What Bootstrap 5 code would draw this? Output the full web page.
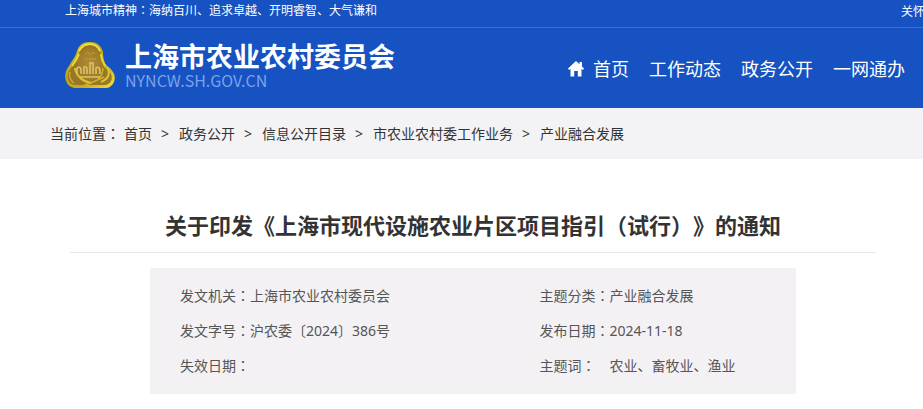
<!DOCTYPE html>
<html lang="zh-CN">
<head>
<meta charset="utf-8">
<meta name="viewport" content="width=device-width, initial-scale=1">
<title>上海市农业农村委员会</title>
<link rel="stylesheet" href="https://cdn.jsdelivr.net/npm/bootstrap@5.3.0/dist/css/bootstrap.min.css">
<style>
  body { font-family: "Noto Sans", "Noto Sans CJK SC", sans-serif; font-size: 14px; line-height: 20px; color: #333; overflow-x: hidden; text-spacing-trim: space-all; }
  .mid { font-family: "Noto Sans CJK TC", sans-serif; }
  .site-head { background: #1652c1; }
  .top-strip { height: 28px; padding-left: 65px; font-size: 12px; border-bottom: 1px solid #3a70d0; overflow: hidden; }
  .top-strip a { width: 22px; overflow: hidden; margin-top: 2px; }
  .main-bar { height: 80px; padding: 0 18px 6px 65px; }
  .brand-text { margin-left: 10px; }
  .brand-name { font-family: "Noto Sans CJK SC", sans-serif; font-size: 27px; line-height: 30px; font-weight: 700; }
  .brand-url { font-family: "Noto Sans CJK SC", sans-serif; font-size: 16px; line-height: 18px; color: #7ba2ec; }
  .main-nav { gap: 20px; font-size: 18px; line-height: 24px; padding-top: 8px; }
  .crumbs { background: #f3f3f5; height: 51px; padding: 0 50px; --bs-breadcrumb-divider: ">"; }
  .crumbs .breadcrumb-item + .breadcrumb-item { padding-left: 9px; }
  .crumbs .breadcrumb-item + .breadcrumb-item::before { padding-right: 10px; color: #333; }
  .crumbs a { color: #333; }
  .notice { padding: 51px 47px 15px 70px; }
  .notice h1 { font-size: 22px; line-height: 28px; padding-bottom: 13px; border-bottom: 1px solid #e8e8e8; }
  .facts { background: #f3f1f4; margin: 15px 80px 0; padding: 10px 0 11px 30px; color: #555; line-height: 35px; }
  .facts th { width: 70px; font-weight: 400; padding: 0; }
  .facts td { padding: 0; }
  .facts table { table-layout: fixed; }
  .facts .wide { width: 47%; }
</style>
<script src="https://cdn.jsdelivr.net/npm/bootstrap@5.3.0/dist/js/bootstrap.bundle.min.js" defer></script>
</head>
<body>
<header class="site-head text-white">
  <div class="top-strip d-flex justify-content-between text-nowrap">
    <span>上海城市精神<span class="mid" lang="zh-TW">：</span>海纳百川、追求卓越、开明睿智、大气谦和</span>
    <a href="#" class="text-white text-decoration-none">关怀版</a>
  </div>
  <div class="main-bar d-flex align-items-center justify-content-between text-nowrap">
    <a href="#" class="d-flex align-items-center text-white text-decoration-none">
      <svg width="50" height="48" viewBox="0 0 50 48" aria-hidden="true">
        <defs>
          <linearGradient id="gold" x1="0" y1="0" x2="1" y2="1">
            <stop offset="0" stop-color="#e2d52a"/><stop offset=".35" stop-color="#c2a51b"/>
            <stop offset=".65" stop-color="#c9a91c"/><stop offset="1" stop-color="#f2e534"/>
          </linearGradient>
          <radialGradient id="bronze"><stop offset="0" stop-color="#b08a36"/><stop offset="1" stop-color="#a07c28"/></radialGradient>
        </defs>
        <path d="M25 1C18 1 14 4 12 10Q11 15 7 20L2 28C-2 36 1 45 9 47H41C49 46 52 37 48 31Q46 27 41 24Q38 19 38 11C36 4 32 1 25 1Z" fill="url(#gold)"/>
        <path d="M25 4C18 4 15 8 14 13L11 20L4 30C1 37 3 43 10 44H40C46 43 48 38 46 33Q44 29 39 26Q36 21 36 13C34 7 31 4 25 4Z" fill="#98762a"/>
        <ellipse cx="25" cy="23" rx="13" ry="16" fill="url(#bronze)"/>
        <path d="M14 13Q11 20 7 25M36 13Q37 22 41 25" fill="none" stroke="#e8d832" stroke-width="2"/>
        <path d="M10 27C11 35 18 41 27 42M42 26C46 33 43 38 36 41" fill="none" stroke="#dcc52c" stroke-width="2"/>
        <path d="M18 45L28 41L39 36M38 27Q38 34 33 38M5 31Q3 38 9 42" fill="none" stroke="#cbb026" stroke-width="1.5"/>
        <path d="M12 33V27Q15 25 16 28V33M19 33V26Q22 25 22 28V33M25 33V22H28V33M31 33V27Q34 25 35 29V33M15 36H35" fill="none" stroke="#dec369" stroke-width="1.5"/>
        <path d="M20 13L23 11L25 14L28 11L30 13M19 18H31" fill="none" stroke="#bf9c35"/>
        <path d="M14 10Q18 3 25 3Q32 3 35 10" fill="none" stroke="#eee23b" stroke-width="2"/>
      </svg>
      <span class="brand-text d-flex flex-column">
        <span class="brand-name">上海市农业农村委员会</span>
        <span class="brand-url">NYNCW.SH.GOV.CN</span>
      </span>
    </a>
    <nav class="main-nav d-flex" aria-label="主导航">
      <a href="#" class="text-white text-decoration-none d-flex align-items-center">
        <svg class="me-2" width="18" height="16" viewBox="0 0 18 16" fill="#fff" aria-hidden="true"><path d="M9 0L1 7.5L2 9L3.5 8V15.5H7.2V10H10.8V15.5H14.5V8L16 9L17 7.5L15 5.6V1H12.5V3.2Z"/></svg>首页</a>
      <a href="#" class="text-white text-decoration-none">工作动态</a>
      <a href="#" class="text-white text-decoration-none">政务公开</a>
      <a href="#" class="text-white text-decoration-none">一网通办</a>
    </nav>
  </div>
</header>
<nav class="crumbs d-flex align-items-center text-nowrap" aria-label="当前位置">
  <span class="me-1">当前位置<span class="mid" lang="zh-TW">：</span></span>
  <ol class="breadcrumb mb-0 flex-nowrap">
    <li class="breadcrumb-item"><a href="#" class="text-decoration-none">首页</a></li>
    <li class="breadcrumb-item"><a href="#" class="text-decoration-none">政务公开</a></li>
    <li class="breadcrumb-item"><a href="#" class="text-decoration-none">信息公开目录</a></li>
    <li class="breadcrumb-item"><a href="#" class="text-decoration-none">市农业农村委工作业务</a></li>
    <li class="breadcrumb-item"><a href="#" class="text-decoration-none">产业融合发展</a></li>
  </ol>
</nav>
<main class="notice">
  <h1 class="text-center fw-bold mb-0">关于印发《上海市现代设施农业片区项目指引<span class="mid" lang="zh-TW">（</span>试行<span class="mid" lang="zh-TW">）</span>》的通知</h1>
  <div class="facts">
    <table class="w-100 text-nowrap">
      <tbody>
        <tr><th scope="row">发文机关<span class="mid" lang="zh-TW">：</span></th><td class="wide">上海市农业农村委员会</td><th scope="row">主题分类<span class="mid" lang="zh-TW">：</span></th><td>产业融合发展</td></tr>
        <tr><th scope="row">发文字号<span class="mid" lang="zh-TW">：</span></th><td>沪农委〔2024〕386号</td><th scope="row">发布日期<span class="mid" lang="zh-TW">：</span></th><td>2024-11-18</td></tr>
        <tr><th scope="row">失效日期<span class="mid" lang="zh-TW">：</span></th><td></td><th scope="row">主题词<span class="mid" lang="zh-TW">：</span></th><td>农业、畜牧业、渔业</td></tr>
      </tbody>
    </table>
  </div>
</main>
</body>
</html>
